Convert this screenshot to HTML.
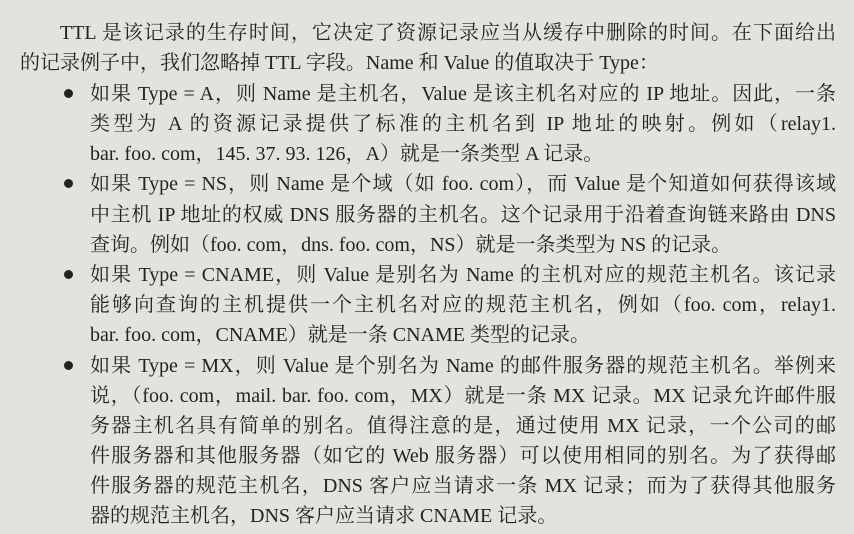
<!DOCTYPE html>
<html><head><meta charset="utf-8"><style>
html,body{margin:0;padding:0}
body{width:854px;height:534px;background:#e4e2dd;overflow:hidden;position:relative;
font-family:"Liberation Serif","Noto Serif CJK SC",serif;color:#252322;font-size:20px}
.l{position:absolute;height:30px;line-height:30px;white-space:nowrap;text-align:justify;text-align-last:justify;right:18px}
.e{text-align-last:left}
.b{position:absolute;left:64px;width:9px;height:9px;border-radius:50%;background:#252322}
</style></head><body>
<div class="l" style="top:18px;left:60px">TTL 是该记录的生存时间，它决定了资源记录应当从缓存中删除的时间。在下面给出</div>
<div class="l e" style="top:48px;left:20px">的记录例子中，我们忽略掉 TTL 字段。Name 和 Value 的值取决于 Type：</div>
<div class="b" style="top:89px"></div>
<div class="l" style="top:79px;left:90px">如果 Type = A，则 Name 是主机名，Value 是该主机名对应的 IP 地址。因此，一条</div>
<div class="l" style="top:109px;left:90px">类型为 A 的资源记录提供了标准的主机名到 IP 地址的映射。例如（relay1.</div>
<div class="l e" style="top:139px;left:90px">bar. foo. com，145. 37. 93. 126，A）就是一条类型 A 记录。</div>
<div class="b" style="top:179px"></div>
<div class="l" style="top:169px;left:90px">如果 Type = NS，则 Name 是个域（如 foo. com），而 Value 是个知道如何获得该域</div>
<div class="l" style="top:200px;left:90px">中主机 IP 地址的权威 DNS 服务器的主机名。这个记录用于沿着查询链来路由 DNS</div>
<div class="l e" style="top:230px;left:90px">查询。例如（foo. com，dns. foo. com，NS）就是一条类型为 NS 的记录。</div>
<div class="b" style="top:270px"></div>
<div class="l" style="top:260px;left:90px">如果 Type = CNAME，则 Value 是别名为 Name 的主机对应的规范主机名。该记录</div>
<div class="l" style="top:290px;left:90px">能够向查询的主机提供一个主机名对应的规范主机名，例如（foo. com，relay1.</div>
<div class="l e" style="top:320px;left:90px">bar. foo. com，CNAME）就是一条 CNAME 类型的记录。</div>
<div class="b" style="top:361px"></div>
<div class="l" style="top:351px;left:90px">如果 Type = MX，则 Value 是个别名为 Name 的邮件服务器的规范主机名。举例来</div>
<div class="l" style="top:381px;left:90px">说，（foo. com，mail. bar. foo. com，MX）就是一条 MX 记录。MX 记录允许邮件服</div>
<div class="l" style="top:411px;left:90px">务器主机名具有简单的别名。值得注意的是，通过使用 MX 记录，一个公司的邮</div>
<div class="l" style="top:441px;left:90px">件服务器和其他服务器（如它的 Web 服务器）可以使用相同的别名。为了获得邮</div>
<div class="l" style="top:471px;left:90px">件服务器的规范主机名，DNS 客户应当请求一条 MX 记录；而为了获得其他服务</div>
<div class="l e" style="top:501px;left:90px">器的规范主机名，DNS 客户应当请求 CNAME 记录。</div>
</body></html>
